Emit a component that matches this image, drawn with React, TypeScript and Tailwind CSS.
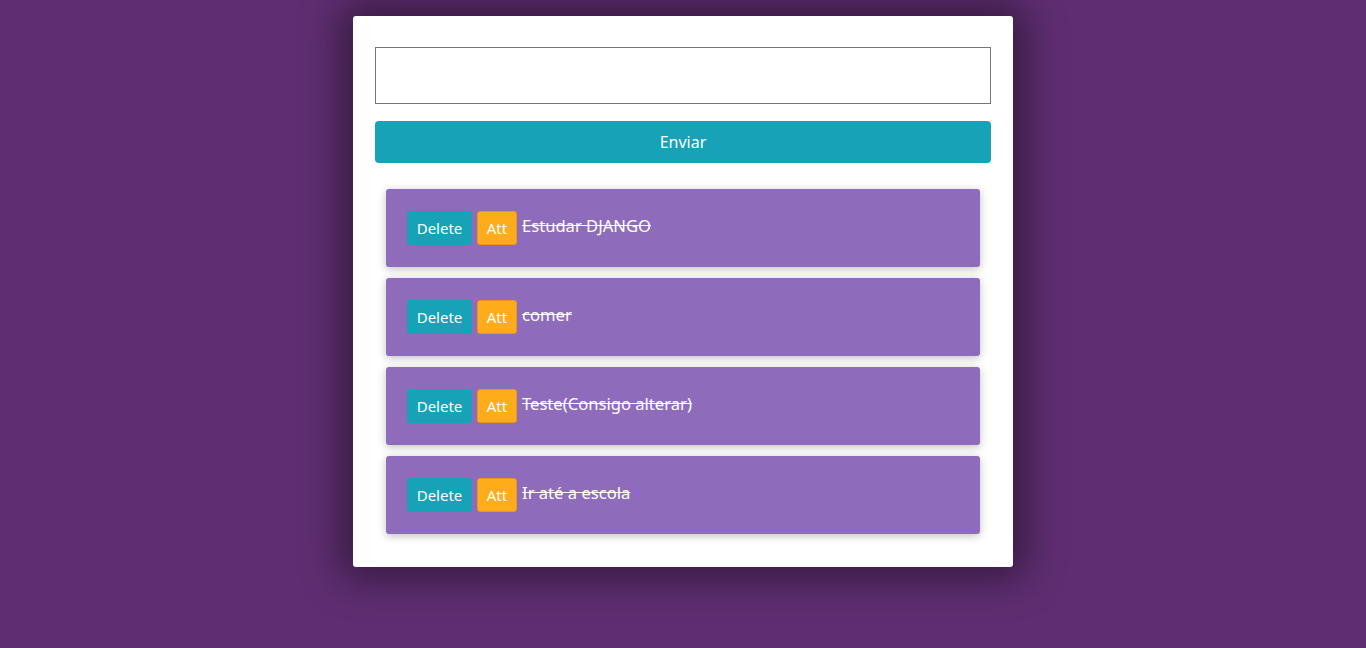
const tasks = ["Estudar DJANGO", "comer", "Teste(Consigo alterar)", "Ir até a escola"];

const TaskItem = ({ title }: { title: string }) => {
  return (
    <li className="flex h-[78px] items-center rounded-[3px] bg-[#8f6bbc] pl-[21px] shadow-[0_2px_8px_rgba(0,0,0,0.25)]">
      <button className="h-[34px] w-[65px] rounded-[3px] bg-[#17a2b8] text-[15px] text-white">
        Delete
      </button>
      <button className="ml-[5px] h-[34px] w-[40px] rounded-[3px] border border-[#e8951a] bg-[#ffac1a] text-[15px] text-white">
        Att
      </button>
      <span className="ml-[5px] -mt-[4px] text-[16.6px] text-white line-through">{title}</span>
    </li>
  );
};

export default function App() {
  return (
    <div className="flex min-h-[648px] justify-center bg-[#5f2e72] pt-4 font-['Noto_Sans',sans-serif]">
      <div className="h-[551px] w-[660px] rounded-[3px] bg-white px-[22px] pt-[31px] shadow-[0_0_40px_12px_rgba(0,0,0,0.45)]">
        <input className="block h-[57px] w-full border border-[#767676] px-2 outline-none" />
        <button className="mt-[17px] h-[42px] w-full rounded-[4px] bg-[#17a2b8] text-[16px] text-white">
          Enviar
        </button>
        <ul className="mt-[26px] flex flex-col gap-[11px] px-[11px]">
          {tasks.map((t) => (
            <TaskItem key={t} title={t} />
          ))}
        </ul>
      </div>
    </div>
  );
}
